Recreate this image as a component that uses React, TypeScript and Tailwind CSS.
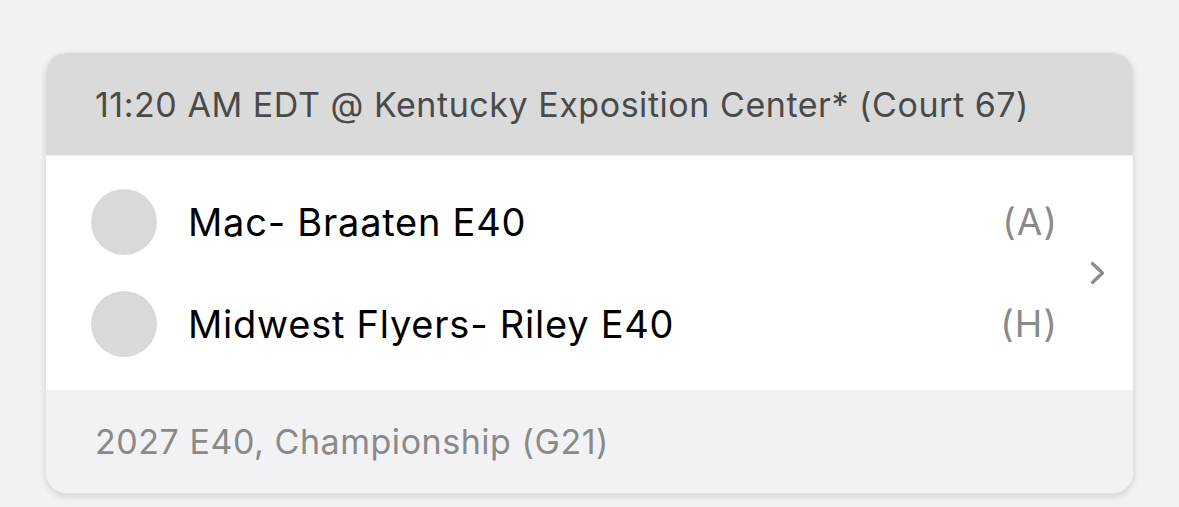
interface Team {
  name: string;
  side: string;
}

const teams: Team[] = [
  { name: "Mac- Braaten E40", side: "(A)" },
  { name: "Midwest Flyers- Riley E40", side: "(H)" },
];

export default function App() {
  return (
    <div
      className="min-h-screen bg-[#f2f2f4] pt-[52px] pl-[45px]"
      style={{ fontFamily: "Inter, 'Noto Sans', sans-serif" }}
    >
      <div className="w-[1089px] overflow-hidden rounded-[22px] border border-[#e3e3e6] bg-white shadow-[0_3px_6px_rgba(0,0,0,0.12)]">
        <div className="flex h-[102px] items-center bg-[#dadada] px-[49px]">
          <span className="text-[34px] tracking-[0.016em] text-[#4a4a4a]">
            11:20 AM EDT @ Kentucky Exposition Center* (Court 67)
          </span>
        </div>

        <div className="flex items-center border-t border-[#ececec] bg-white py-[33px] pl-[45px] pr-[27px]">
          <div className="flex flex-1 flex-col gap-[36px]">
            {teams.map((team) => (
              <div key={team.name} className="flex h-[66px] items-center">
                <div className="h-[66px] w-[66px] rounded-full bg-[#d9d9d9]" />
                <span className="ml-[31px] flex-1 text-[38px] tracking-[0.02em] text-black">
                  {team.name}
                </span>
                <span className="text-[37px] tracking-[0.03em] text-[#8a8a8a]">{team.side}</span>
              </div>
            ))}
          </div>
          <svg className="ml-[32px] h-[24px] w-[16px]" viewBox="0 0 16 24" fill="none">
            <polyline
              points="2.5,2.5 12.5,12 2.5,21.5"
              stroke="#8a8a8a"
              strokeWidth="3.2"
              strokeLinecap="round"
              strokeLinejoin="round"
            />
          </svg>
        </div>

        <div className="flex h-[103px] items-center bg-[#f2f2f4] px-[49px]">
          <span className="text-[34px] tracking-[0.016em] text-[#8a8a8a]">
            2027 E40, Championship (G21)
          </span>
        </div>
      </div>
    </div>
  );
}
